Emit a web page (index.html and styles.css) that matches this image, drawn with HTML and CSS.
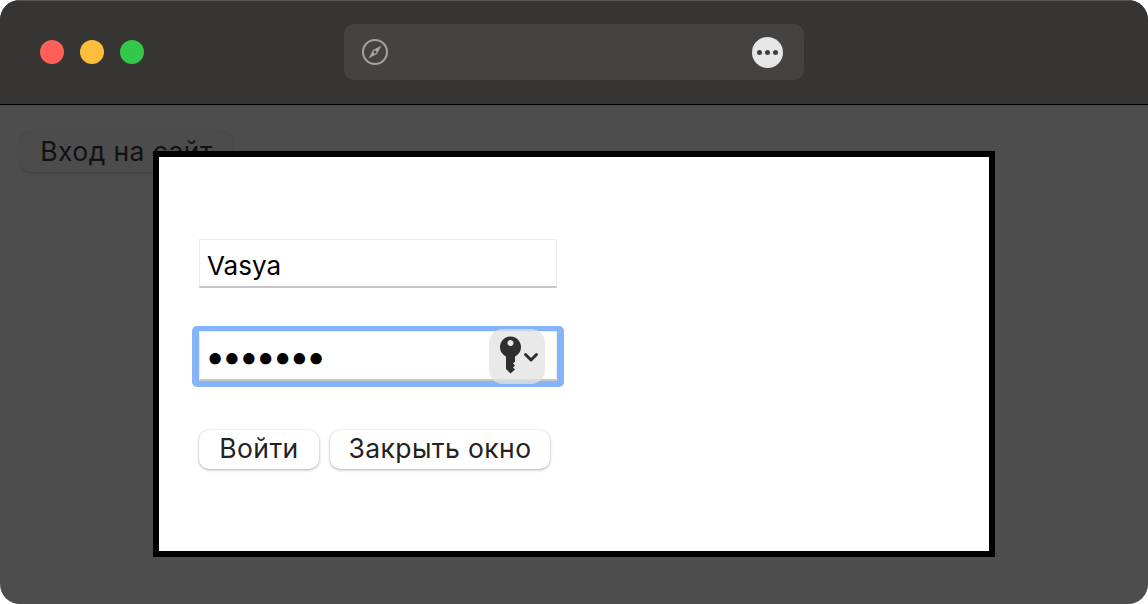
FILE: index.html
```html
<!DOCTYPE html>
<html lang="ru">
<head>
<meta charset="utf-8">
<title>Вход на сайт</title>
<link rel="stylesheet" href="styles.css">
</head>
<body>
<div class="window">
  <header class="titlebar">
    <div class="lights">
      <span class="light red"></span>
      <span class="light yellow"></span>
      <span class="light green"></span>
    </div>
    <div class="address">
      <svg class="compass" width="28" height="28" viewBox="0 0 28 28">
        <circle cx="14" cy="14" r="12" fill="none" stroke="#a3a3a1" stroke-width="2"/>
        <path d="M20.500 7.500 L16 16 L7.500 20.500 L12 12 Z" fill="#a3a3a1"/>
        <circle cx="14" cy="14" r="1.500" fill="#444341"/>
      </svg>
      <span class="more">
        <i></i><i></i><i></i>
      </span>
    </div>
  </header>
  <main class="content">
    <button class="open-btn">Вход на сайт</button>
    <div class="dialog">
      <form class="login">
        <input class="field" type="text" value="Vasya">
        <div class="password">
          <input class="field pass-input" type="password" value="1234567">
          <span class="keychip">
            <svg width="56" height="55" viewBox="0 0 56 55">
              <path fill-rule="evenodd" fill="#2f2f2f" d="M26 27.500 A10.500 10.500 0 1 0 17 27.500 L17 40 L21.500 44.500 L26 40.500 L24 38.500 L26 36.500 L24 34.500 L26 32.500 Z M21.500 11 a3 3 0 1 0 0.010 0 Z"/>
              <path d="M36.500 25.500 L42 31 L47.500 25.500" fill="none" stroke="#2f2f2f" stroke-width="3" stroke-linecap="round" stroke-linejoin="round"/>
            </svg>
          </span>
        </div>
        <div class="actions">
          <button type="button" class="btn login-btn">Войти</button>
          <button type="button" class="btn close-btn">Закрыть окно</button>
        </div>
      </form>
    </div>
  </main>
</div>
</body>
</html>
```

FILE: styles.css
```css
* { box-sizing: border-box; }
html, body { margin: 0; padding: 0; background: #fff; }
body { width: 1148px; height: 604px; overflow: hidden; font-family: Inter, "Liberation Sans", sans-serif; }

.window {
  position: relative;
  width: 1148px;
  height: 604px;
  border-radius: 20px;
  overflow: hidden;
  background: #4d4d4d;
  display: flex;
  flex-direction: column;
}

.titlebar {
  height: 105px;
  flex: none;
  background: #373533;
  border-bottom: 1px solid #000;
  box-shadow: inset 0 1px 0 #5a5957;
  display: flex;
  align-items: flex-start;
  padding: 24px 0 0 40px;
}
.lights { display: flex; gap: 16px; margin-top: 16px; }
.light { width: 24px; height: 24px; border-radius: 50%; display: block; }
.red { background: #ff5f57; }
.yellow { background: #ffbd3e; }
.green { background: #34c84a; }

.address {
  margin-left: 200px;
  width: 460px;
  height: 56px;
  background: #444341;
  border-radius: 10px;
  display: flex;
  align-items: center;
  justify-content: space-between;
  padding: 0 21px 0 17px;
}
.compass { display: block; margin-top: -1px; }
.more {
  width: 31px;
  height: 31px;
  border-radius: 50%;
  background: #e6e6e6;
  display: flex;
  align-items: center;
  justify-content: center;
  gap: 3px;
}
.more i { width: 5px; height: 5px; border-radius: 50%; background: #3f3f3d; display: block; }

.content { flex: 1; padding: 27px 0 0 20px; position: relative; }

.open-btn {
  display: block;
  width: 213px;
  height: 40px;
  padding: 0 0 2px;
  border: 0;
  border-radius: 10px;
  background: #4c4c4c;
  box-shadow: 0 0 1px #424242, 0 1px 2px #424242;
  color: #111;
  font: 26.5px/38px Inter, "Liberation Sans", sans-serif;
  letter-spacing: 0.4px;
}

.dialog {
  position: absolute;
  left: 153px;
  top: 46px;
  width: 842px;
  height: 406px;
  background: #fff;
  border: 6px solid #000;
  padding: 82px 40px 0;
}
.login { display: flex; flex-direction: column; align-items: flex-start; }

.field {
  display: block;
  position: relative;
  width: 358px;
  height: 49px;
  margin: 0;
  padding: 5px 7px 0 7px;
  background: #fff;
  border: 1px solid #ececec;
  border-bottom: 2px solid #c6c6c6;
  border-radius: 0;
  outline: 0;
  color: #000;
  font: 26px Inter, "Liberation Sans", sans-serif;
}

.password { position: relative; margin-top: 43px; width: 358px; height: 50px; }
.password::before {
  content: "";
  position: absolute;
  inset: -5px -7px -6px;
  border-radius: 5px;
  background: #86b4fa;
}
.pass-input {
  height: 50px;
  padding: 0 7px 0 5px;
  font-size: 36px;
  letter-spacing: -3.4px;
}
.keychip {
  position: absolute;
  right: 12px;
  top: -2px;
  width: 56px;
  height: 55px;
  border-radius: 14px;
  background: rgba(225, 225, 225, 0.75);
  display: block;
}
.keychip svg { display: block; }

.actions { display: flex; gap: 11px; margin-top: 49px; }
.btn {
  height: 39px;
  padding: 0 0 2px;
  border: 0;
  border-radius: 10px;
  background: #fff;
  box-shadow: 0 0 1px rgba(0, 0, 0, 0.16), 0 1px 3px rgba(0, 0, 0, 0.3);
  color: #222;
  font: 26.5px/37px Inter, "Liberation Sans", sans-serif;
  letter-spacing: 0.4px;
}
.login-btn { width: 120px; }
.close-btn { width: 220px; }
```
